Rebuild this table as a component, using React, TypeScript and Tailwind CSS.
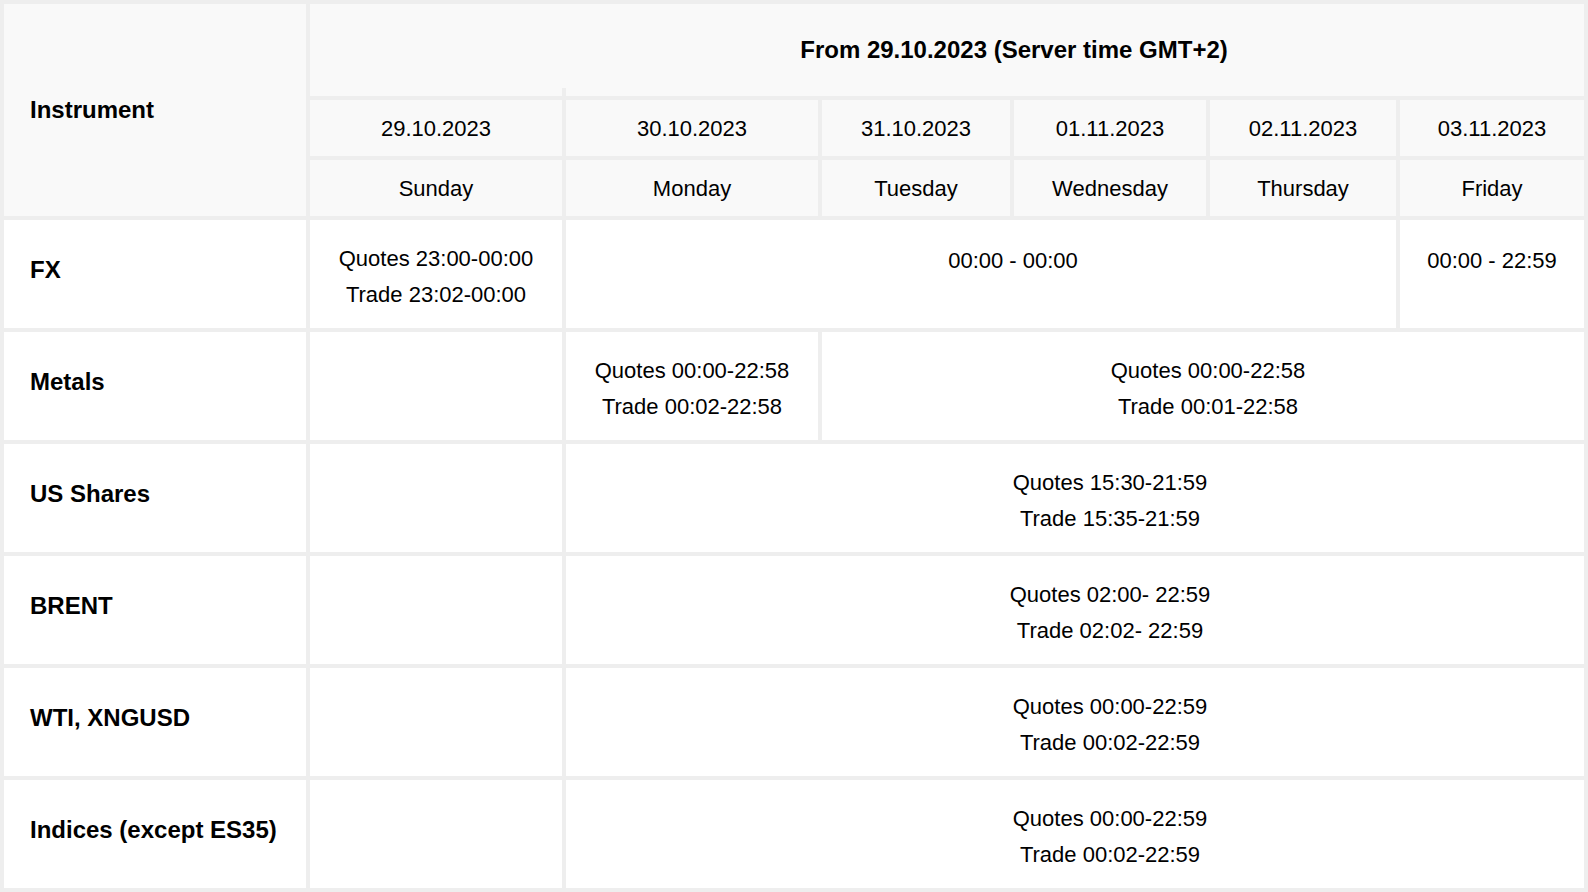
import React from 'react';

const days = [
  { date: '29.10.2023', day: 'Sunday' },
  { date: '30.10.2023', day: 'Monday' },
  { date: '31.10.2023', day: 'Tuesday' },
  { date: '01.11.2023', day: 'Wednesday' },
  { date: '02.11.2023', day: 'Thursday' },
  { date: '03.11.2023', day: 'Friday' },
];

const Label = ({ children }: { children: React.ReactNode }) => (
  <div className="bg-white flex items-center pl-[26px] pb-[8px] text-[24px] font-bold text-black">
    {children}
  </div>
);

const Hours = ({
  lines,
  className = 'pt-[5px]',
}: {
  lines: [string, string];
  className?: string;
}) => (
  <div className={`bg-white flex flex-col items-center justify-center text-[22px] leading-[36px] text-black ${className}`}>
    <span className="whitespace-pre">{lines[0]}</span>
    <span className="whitespace-pre">{lines[1] || '\u00a0'}</span>
  </div>
);

const Empty = () => <div className="bg-white" />;

const App = () => {
  return (
    <div
      className="w-[1588px] h-[892px] bg-[#eeeeee] p-[4px] grid gap-[4px] grid-cols-[302px_252px_252px_188px_192px_186px_184px] grid-rows-[92px_56px_56px_repeat(6,108px)]"
      style={{ fontFamily: '"Liberation Sans", Arial, sans-serif' }}
    >
      {/* header */}
      <div className="row-span-3 bg-[#f9f9f9] flex items-center pl-[26px] text-[24px] font-bold text-black">
        Instrument
      </div>
      <div className="col-span-6 relative bg-[#f9f9f9] flex items-center justify-center pl-[134px] text-[24px] font-bold text-black">
        From 29.10.2023 (Server time GMT+2)
        <div className="absolute left-[252px] bottom-0 w-[4px] h-[8px] bg-[#eeeeee]" />
      </div>
      {days.map((d) => (
        <div key={d.date} className="bg-[#f9f9f9] flex items-center justify-center text-[22px] text-black">
          {d.date}
        </div>
      ))}
      {days.map((d) => (
        <div key={d.day} className="bg-[#f9f9f9] flex items-center justify-center text-[22px] text-black">
          {d.day}
        </div>
      ))}

      {/* FX */}
      <Label>FX</Label>
      <Hours lines={['Quotes 23:00-00:00', 'Trade 23:02-00:00']} />
      <Hours lines={['00:00 - 00:00', '']} className="col-span-4 pl-[64px] pt-[9px]" />
      <Hours lines={['00:00 - 22:59', '']} className="pt-[9px]" />

      {/* Metals */}
      <Label>Metals</Label>
      <Empty />
      <Hours lines={['Quotes 00:00-22:58', 'Trade 00:02-22:58']} />
      <Hours lines={['Quotes 00:00-22:58', 'Trade 00:01-22:58']} className="col-span-4 pl-[10px] pt-[5px]" />

      {/* US Shares */}
      <Label>US Shares</Label>
      <Empty />
      <Hours lines={['Quotes 15:30-21:59', 'Trade 15:35-21:59']} className="col-span-5 pl-[70px] pt-[5px]" />

      {/* BRENT */}
      <Label>BRENT</Label>
      <Empty />
      <Hours lines={['Quotes 02:00- 22:59', 'Trade 02:02- 22:59']} className="col-span-5 pl-[70px] pt-[5px]" />

      {/* WTI */}
      <Label>WTI, XNGUSD</Label>
      <Empty />
      <Hours lines={['Quotes 00:00-22:59', 'Trade 00:02-22:59']} className="col-span-5 pl-[70px] pt-[5px]" />

      {/* Indices */}
      <Label>Indices (except ES35)</Label>
      <Empty />
      <Hours lines={['Quotes 00:00-22:59', 'Trade 00:02-22:59']} className="col-span-5 pl-[70px] pt-[5px]" />
    </div>
  );
};

export default App;
